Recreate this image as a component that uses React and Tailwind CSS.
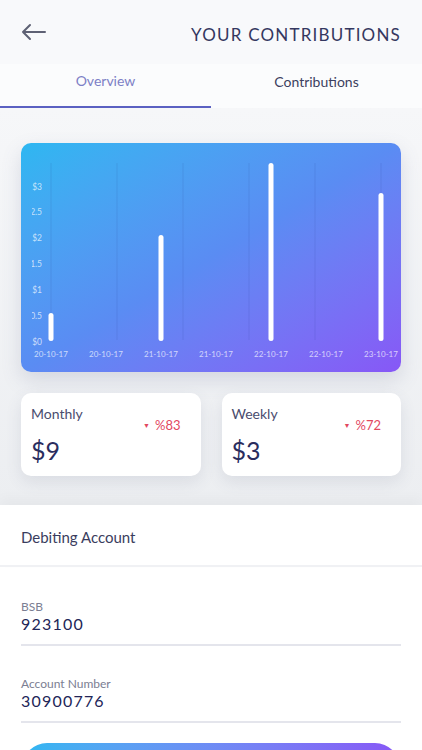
import React from 'react';

const bars = [
  { x: 30, top: 170 },
  { x: 140, top: 92 },
  { x: 250, top: 20 },
  { x: 360, top: 50 },
];

const yLabels = [
  ['$3', 44],
  ['2.5', 69],
  ['$2', 95],
  ['$1.5', 121],
  ['$1', 147],
  ['0.5', 173],
  ['$0', 199],
];

const xLabels = ['20-10-17', '20-10-17', '21-10-17', '21-10-17', '22-10-17', '22-10-17', '23-10-17'];

const Chart = () => (
  <div className="h-[229px] rounded-[10px] bg-gradient-to-br from-[#2db7f1] via-[#5a8cf3] to-[#8757f6] shadow-[0_8px_20px_rgba(90,100,140,0.18)] overflow-hidden">
    <svg width="380" height="229" viewBox="0 0 380 229" className="block">
      <defs>
        <clipPath id="ylab">
          <rect x="11" y="0" width="40" height="229" />
        </clipPath>
      </defs>
      {[30, 96, 162, 228, 294, 360].map((x) => (
        <line key={x} x1={x} y1="20" x2={x} y2="197" stroke="rgba(40,60,140,0.12)" strokeWidth="1" />
      ))}
      {bars.map((b) => (
        <rect key={b.x} x={b.x - 2.5} y={b.top} width="5" height={198 - b.top} rx="2.5" fill="#fff" />
      ))}
      <g clipPath="url(#ylab)">
        {yLabels.map(([t, y]) => (
          <text key={t} x="21" y={y + 3} textAnchor="end" fontSize="8.5" fill="rgba(255,255,255,0.7)" fontFamily="Lato, sans-serif">
            {t}
          </text>
        ))}
      </g>
      {xLabels.map((t, i) => (
        <text key={i} x={30 + i * 55} y="214" textAnchor="middle" fontSize="8" fill="rgba(255,255,255,0.7)" fontFamily="Lato, sans-serif">
          {t}
        </text>
      ))}
    </svg>
  </div>
);

const StatCard = ({ label, value, change }) => (
  <div className="h-[83px] rounded-[10px] bg-white shadow-[0_6px_16px_rgba(80,90,120,0.12)] px-[10px] pt-[14px] relative">
    <div className="text-[14px] text-[#4a4d6e] leading-none">{label}</div>
    <div className="absolute right-[20px] top-[26px] flex items-center gap-[5px] text-[13px] text-[#e2485f] leading-none">
      <span className="text-[7px]">▼</span>
      <span>{change}</span>
    </div>
    <div className="mt-[17px] text-[25px] text-[#2a2d5e] leading-none">{value}</div>
  </div>
);

const Field = ({ label, value }) => (
  <div className="border-b-2 border-[#e4e5ec] pb-[12px]">
    <div className="text-[12px] text-[#7b7e92] leading-none">{label}</div>
    <div className="mt-[3px] text-[16px] tracking-[1.2px] text-[#222557] leading-none">{value}</div>
  </div>
);

const App = () => {
  return (
    <div className="w-[422px] h-[750px] overflow-hidden bg-white font-['Lato',_sans-serif]">
      {/* Header */}
      <div className="h-16 bg-[#f8f9fb] px-[21px] flex items-center justify-between">
        <svg width="26" height="18" viewBox="0 0 26 18" fill="none" stroke="#5e6174" strokeWidth="2" strokeLinecap="round" strokeLinejoin="round">
          <path d="M24 9H2M9 2L2 9l7 7" />
        </svg>
        <h1 className="text-[17px] tracking-[1.2px] text-[#34375f] font-normal mt-[5px]">YOUR CONTRIBUTIONS</h1>
      </div>

      {/* Tabs */}
      <div className="grid grid-cols-2 h-[44px] bg-[#fbfcfd]">
        <div className="flex items-center justify-center border-b-2 border-[#5b61c2] text-[14px] text-[#7d80c6] pb-[10px]">Overview</div>
        <div className="flex items-center justify-center text-[14px] text-[#3c3f5f] pb-[10px]">Contributions</div>
      </div>

      {/* Overview */}
      <div className="bg-gradient-to-b from-[#f6f7f9] to-[#eceef1] px-[21px] pt-[35px] pb-[29px]">
        <Chart />
        <div className="grid grid-cols-2 gap-[21px] mt-[21px]">
          <StatCard label="Monthly" value="$9" change="%83" />
          <StatCard label="Weekly" value="$3" change="%72" />
        </div>
      </div>

      {/* Debiting account */}
      <div className="h-[62px] flex items-center px-[21px] pt-[4px] border-b-2 border-[#f0f1f4] shadow-[0_-6px_12px_rgba(0,0,0,0.03)]">
        <span className="text-[15px] text-[#3a3d5e]">Debiting Account</span>
      </div>
      <div className="px-[21px] pt-[34px] flex flex-col gap-[32px]">
        <Field label="BSB" value="923100" />
        <Field label="Account Number" value="30900776" />
      </div>
      <div className="px-[22px] mt-[20px]">
        <button className="w-full h-[50px] rounded-full bg-gradient-to-r from-[#2db7f1] to-[#8757f6]" />
      </div>
    </div>
  );
};

export default App;
